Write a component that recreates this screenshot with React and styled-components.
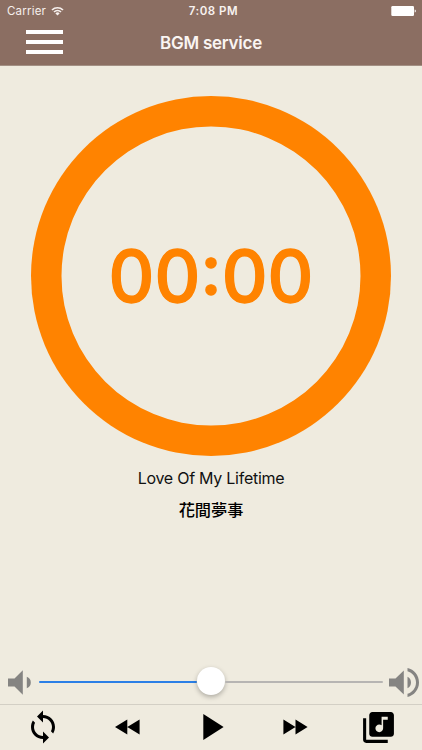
import React from 'react';
import styled, { createGlobalStyle } from 'styled-components';

const Global = createGlobalStyle`
  * { box-sizing: border-box; }
  body { margin: 0; background: #efebdf; }
`;

const Screen = styled.div`
  width: 422px;
  height: 750px;
  display: flex;
  flex-direction: column;
  overflow: hidden;
  background: #efebdf;
  color: #000;
  font-family: Inter, 'Noto Sans CJK TC', sans-serif;
`;

const Header = styled.header`
  height: 66px;
  flex: none;
  background: #8b6e62;
  border-bottom: 1px solid #a39084;
  color: #fff;
`;

const StatusBar = styled.div`
  height: 22px;
  display: grid;
  grid-template-columns: 1fr auto 1fr;
  align-items: center;
  padding: 0 6px 0 7px;
  font-size: 11.5px;
  line-height: 22px;
`;

const Carrier = styled.div`
  display: flex;
  align-items: center;
  gap: 5px;
  color: #f6efec;
  letter-spacing: 0.2px;
`;

const Clock = styled.div`
  font-weight: 600;
  font-size: 11.5px;
  letter-spacing: 0.5px;
  margin-left: 4px;
  color: #f8f2ef;
`;

const BatterySlot = styled.div`
  display: flex;
  justify-content: flex-end;
`;

const NavBar = styled.div`
  height: 43px;
  display: grid;
  grid-template-columns: 90px 1fr 90px;
  align-items: center;
`;

const MenuButton = styled.button`
  width: 37px;
  height: 25px;
  margin: -3px 0 0 26.4px;
  padding: 0;
  border: 0;
  background: none;
  display: flex;
  flex-direction: column;
  justify-content: space-between;
`;

const MenuLine = styled.span`
  display: block;
  height: 4.4px;
  width: 100%;
  background: #fff;
`;

const Title = styled.h1`
  margin: 0;
  text-align: center;
  font-size: 17px;
  line-height: 43px;
  font-weight: 600;
  letter-spacing: -0.25px;
  color: #faf5f2;
`;

const Main = styled.main`
  flex: 1;
  display: flex;
  flex-direction: column;
  align-items: center;
  padding-top: 30px;
`;

const Dial = styled.div`
  width: 360px;
  height: 360px;
  flex: none;
  border-radius: 50%;
  box-shadow: inset 0 0 0 30.5px #ff8300;
  display: flex;
  align-items: center;
  justify-content: center;
`;

const Timer = styled.div`
  font-size: 71px;
  line-height: 80px;
  font-weight: 500;
  -webkit-text-stroke: 1.3px #ff8300;
  color: #ff8300;
  white-space: nowrap;
`;

const Song = styled.div`
  margin-top: 11px;
  font-size: 16px;
  line-height: 22px;
  letter-spacing: -0.26px;
  color: #111;
`;

const Artist = styled.div`
  margin-top: 10px;
  font-size: 16.2px;
  line-height: 22px;
  font-weight: 500;
`;

const VolumeRow = styled.div`
  height: 44px;
  flex: none;
  display: flex;
  align-items: center;
  padding: 0 3px 0 8px;
  color: #858482;
`;

const Track = styled.div`
  width: 344px;
  height: 28px;
  margin: 0 6px 0 8px;
  display: flex;
  align-items: center;
`;

const TrackPart = styled.div`
  flex: 1;
  height: 2px;
  border-radius: 1px;
  background: ${(p) => (p.$filled ? '#2b7fe6' : '#b7b5b3')};
`;

const Thumb = styled.div`
  width: 28px;
  height: 28px;
  flex: none;
  margin: -2px 0 0;
  border-radius: 50%;
  background: #fff;
  box-shadow: 0 2px 5px rgba(0, 0, 0, 0.28);
`;

const Toolbar = styled.footer`
  height: 46px;
  flex: none;
  border-top: 1px solid #d3cfc5;
  display: grid;
  grid-template-columns: 86px 83px 88px 76px 1fr;
  padding: 0 0 1px;
`;

const ToolButton = styled.button`
  border: 0;
  padding: 0 0 0 ${(p) => p.$shift || 0}px;
  background: none;
  color: #000;
  display: flex;
  align-items: center;
  justify-content: center;
`;

const Icon = styled.svg`
  display: block;
  flex: none;
  fill: currentColor;
`;

export default function App() {
  return (
    <>
      <Global />
      <Screen>
        <Header>
          <StatusBar>
            <Carrier>
              Carrier
              <Icon width="13" height="10" viewBox="0 0 13 10">
                <path d="M0.4 3.4a8.8 8.8 0 0 1 12.2 0l-1.2 1.2a7 7 0 0 0-9.8 0z" />
                <path d="M2.4 5.4a5.9 5.9 0 0 1 8.2 0L9.4 6.6a4.2 4.2 0 0 0-5.8 0z" />
                <path d="M4.4 7.4a3 3 0 0 1 4.2 0L6.5 9.5z" />
              </Icon>
            </Carrier>
            <Clock>7:08 PM</Clock>
            <BatterySlot>
              <Icon width="25" height="11" viewBox="0 0 25 11">
                <rect x="0.3" y="0" width="22.7" height="10" rx="1.2" />
                <path d="M23.7 3.5v3c1.5-.3 1.5-2.7 0-3z" />
              </Icon>
            </BatterySlot>
          </StatusBar>
          <NavBar>
            <MenuButton aria-label="Menu">
              <MenuLine />
              <MenuLine />
              <MenuLine />
            </MenuButton>
            <Title>BGM service</Title>
          </NavBar>
        </Header>
        <Main>
          <Dial>
            <Timer>00:00</Timer>
          </Dial>
          <Song>Love Of My Lifetime</Song>
          <Artist lang="zh-TW">花間夢事</Artist>
        </Main>
        <VolumeRow>
          <Icon width="23" height="25" viewBox="0 0 23 25">
            <path d="M0 8.5h6.5L14.8.3v24.4L6.5 16.5H0zM18.8 6.7a6.2 6.2 0 0 1 0 11.6z" />
          </Icon>
          <Track>
            <TrackPart $filled />
            <Thumb />
            <TrackPart />
          </Track>
          <Icon width="30" height="29" viewBox="0 0 30 29">
            <path d="M0 10.5h6.5L14.8 2.6v23.8L6.5 18.5H0zM18.5 8.8a6.4 6.4 0 0 1 0 11.4zM18.5.1C25 1.5 30 7.3 30 14.5S25 27.5 18.5 28.9v-3.1C23.300 24.400 27 20 27 14.500S23.300 4.600 18.500 3.200z" />
          </Icon>
        </VolumeRow>
        <Toolbar>
          <ToolButton aria-label="Repeat">
            <Icon width="36" height="36" viewBox="0 0 24 24">
              <path d="M12 4V1L8 5l4 4V6c3.310 0 6 2.690 6 6 0 1.010-.250 1.970-.700 2.800l1.460 1.460C19.540 15.030 20 13.570 20 12c0-4.420-3.580-8-8-8zm0 14c-3.310 0-6-2.690-6-6 0-1.010.250-1.970.700-2.800L5.240 7.740C4.460 8.970 4 10.430 4 12c0 4.420 3.580 8 8 8v3l4-4-4-4v3z" />
            </Icon>
          </ToolButton>
          <ToolButton aria-label="Previous">
            <Icon width="25" height="16" viewBox="0 0 25 16">
              <path d="M0 8 12.300.400v15.200zM12.300 8 24.600.400v15.200z" />
            </Icon>
          </ToolButton>
          <ToolButton aria-label="Play" $shift={1}>
            <Icon width="21" height="26" viewBox="0 0 21 26">
              <path d="M.300 0v26L20.600 13z" />
            </Icon>
          </ToolButton>
          <ToolButton aria-label="Next">
            <Icon width="25" height="16" viewBox="0 0 25 16">
              <path d="M.400.400v15.200L12.500 8zM12.500.400v15.200L24.600 8z" />
            </Icon>
          </ToolButton>
          <ToolButton aria-label="Music library" $shift={2.5}>
            <Icon width="37" height="37" viewBox="0 0 24 24">
              <path d="M20 2H8c-1.100 0-2 .900-2 2v12c0 1.100.900 2 2 2h12c1.100 0 2-.900 2-2V4c0-1.100-.900-2-2-2zm-2 5h-3v5.500c0 1.380-1.120 2.500-2.500 2.500S10 13.880 10 12.500s1.120-2.500 2.500-2.500c.570 0 1.080.190 1.500.510V5h4v2zM4 6H2v14c0 1.100.900 2 2 2h14v-2H4V6z" />
            </Icon>
          </ToolButton>
        </Toolbar>
      </Screen>
    </>
  );
}
